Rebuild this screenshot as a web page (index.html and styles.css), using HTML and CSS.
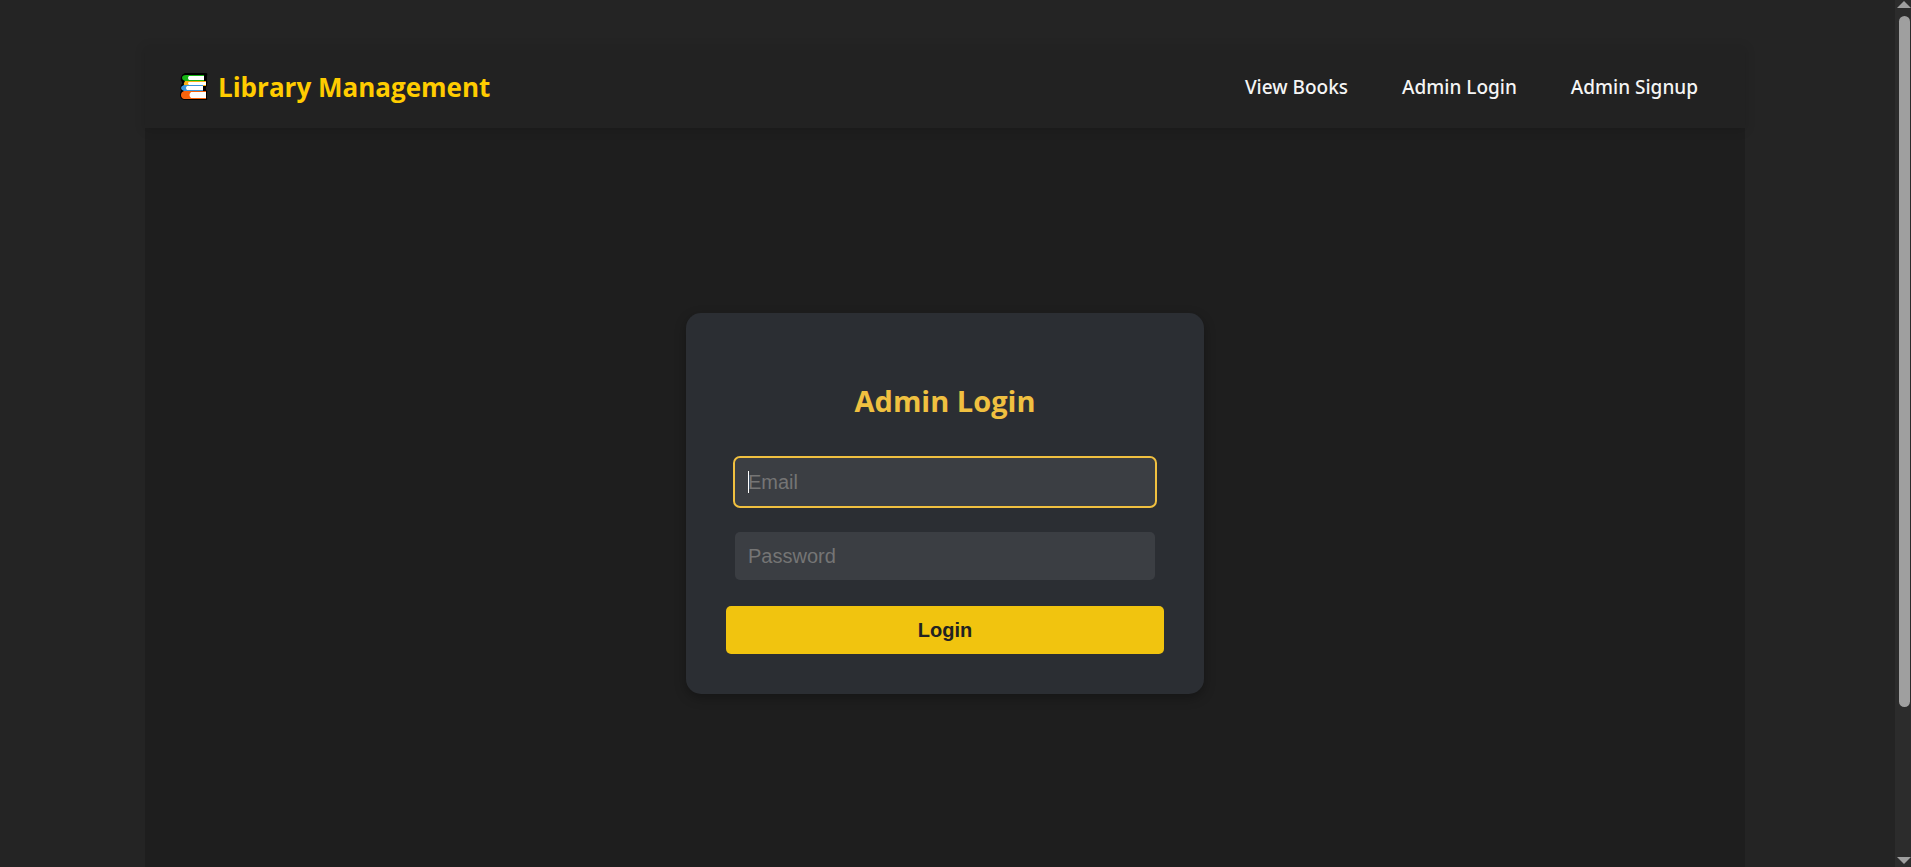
FILE: index.html
```html
<!DOCTYPE html>
<html lang="en">
<head>
<meta charset="utf-8">
<title>Library Management</title>
<link rel="stylesheet" href="styles.css">
</head>
<body>
<div class="page">
  <div class="container">
    <nav class="navbar">
      <div class="brand">
        <svg class="brand-icon" viewBox="0 0 28 28" aria-hidden="true">
          <path d="M5 0H26Q28 0 27 3V8Q28 9 27 11V13L26 14V17Q28 18 27 20V25Q28 27 26 27H4Q0 26 0 22Q0 19 1 18Q0 15 1 12Q3 11 2 9Q0 7 1 4Q2 1 5 0Z" fill="#000"/>
          <path d="M6 2H24V3H9V7H24V8H5Q2 7 2 5Q2 2 6 2Z" fill="#16b516"/>
          <path d="M9 3H24V7H9Q7 5 9 3Z" fill="#fff"/>
          <path d="M5 8H26V9H9V12H26V13H6Q3 12 4 10Z" fill="#fcb116"/>
          <path d="M9 9H26V12H9Q7 10 9 9Z" fill="#fff"/>
          <path d="M4 12H23V13H8V17H23V18H4Q1 17 1 15Q1 13 4 12Z" fill="#3a96dd"/>
          <path d="M7 13H23V17H7Q5 15 7 13Z" fill="#fff"/>
          <path d="M4 18H26V19H12V25H26V26H4Q1 25 1 22Q1 19 4 18Z" fill="#f7630c"/>
          <path d="M11 19H26V25H11Q8 22 11 19Z" fill="#fff"/>
        </svg>
        <span>Library Management</span>
      </div>
      <div class="links">
        <a href="#books">View Books</a>
        <a href="#login">Admin Login</a>
        <a href="#signup">Admin Signup</a>
      </div>
    </nav>
    <main class="content">
      <form class="card">
        <h2>Admin Login</h2>
        <div class="field-wrap active">
          <input class="field" type="email" placeholder="Email" aria-label="Email" autofocus>
        </div>
        <div class="field-wrap">
          <input class="field" type="password" placeholder="Password" aria-label="Password">
        </div>
        <button class="submit" type="button">Login</button>
      </form>
    </main>
  </div>
</div>
<div class="scrollbar" aria-hidden="true">
  <svg class="arrow" viewBox="0 0 14 7"><path d="M7 0L14 7H0Z"/></svg>
  <div class="track"><div class="thumb"></div></div>
  <svg class="arrow" viewBox="0 0 14 7"><path d="M0 0H14L7 7Z"/></svg>
</div>
</body>
</html>
```

FILE: styles.css
```css
* {
  box-sizing: border-box;
}

body {
  margin: 0;
  display: flex;
  height: 100vh;
  overflow: hidden;
  background: #242424;
  color: #f5f5f5;
  font-family: "Segoe UI", "Open Sans", "Noto Sans", sans-serif;
}

.page {
  flex: 1;
  padding: 46px 45px 40px 40px;
}

.container {
  max-width: 1600px;
  margin: 0 auto;
  background: #1e1e1e;
}

.navbar {
  display: flex;
  align-items: center;
  justify-content: space-between;
  height: 82px;
  padding: 0 47px 0 35px;
  background: #222;
  box-shadow: 0 2px 10px rgba(0, 0, 0, 0.15);
}

.brand {
  display: flex;
  align-items: center;
  gap: 10px;
  color: #fc0;
  font-size: 26px;
  font-weight: 700;
}

.brand-icon {
  width: 28px;
  height: 28px;
}

.links {
  display: flex;
  gap: 54px;
}

.links a {
  color: #f5f5f5;
  font-family: "Segoe UI", "Noto Sans", "Open Sans", sans-serif;
  font-size: 19px;
  font-weight: 500;
  text-decoration: none;
}

.content {
  display: flex;
  align-items: center;
  justify-content: center;
  min-height: calc(100vh - 116px);
}

.card {
  display: flex;
  flex-direction: column;
  gap: 26px;
  width: 518px;
  padding: 66px 40px 40px;
  border-radius: 15px;
  background: #2b2e33;
  box-shadow: 0 4px 12px rgba(0, 0, 0, 0.3);
}

.card h2 {
  margin: 0 0 10px;
  color: #f0c040;
  font-size: 29px;
  font-weight: 700;
  line-height: 43px;
  text-align: center;
}

.field-wrap {
  position: relative;
  display: flex;
  margin: 0 9px;
}

/* Text cursor drawn over the active field */
.field-wrap.active::after {
  content: "";
  position: absolute;
  top: 13px;
  left: 13px;
  width: 1px;
  height: 22px;
  background: #fff;
}

.field,
.submit {
  height: 48px;
  border: 0;
  border-radius: 5px;
  font-family: Arial, "Liberation Sans", sans-serif;
  font-size: 20px;
}

.field {
  flex: 1;
  padding: 0 13px;
  background: #3b3e43;
  color: #fff;
  caret-color: transparent;
}

.field::placeholder {
  color: #757575;
}

.field:focus {
  outline: 2px solid #f0c040;
}

.submit {
  background: #f1c40f;
  color: #222;
  font-weight: 700;
}

.scrollbar {
  display: flex;
  flex-direction: column;
  align-items: center;
  width: 16px;
  padding: 1px 0 3px 2px;
  background: #2c2c2c;
}

.arrow {
  width: 14px;
  height: 7px;
  fill: #9f9f9f;
}

.track {
  flex: 1;
  padding: 8px 0;
}

.thumb {
  width: 11px;
  height: 83%;
  border-radius: 6px;
  background: #9f9f9f;
}
```
